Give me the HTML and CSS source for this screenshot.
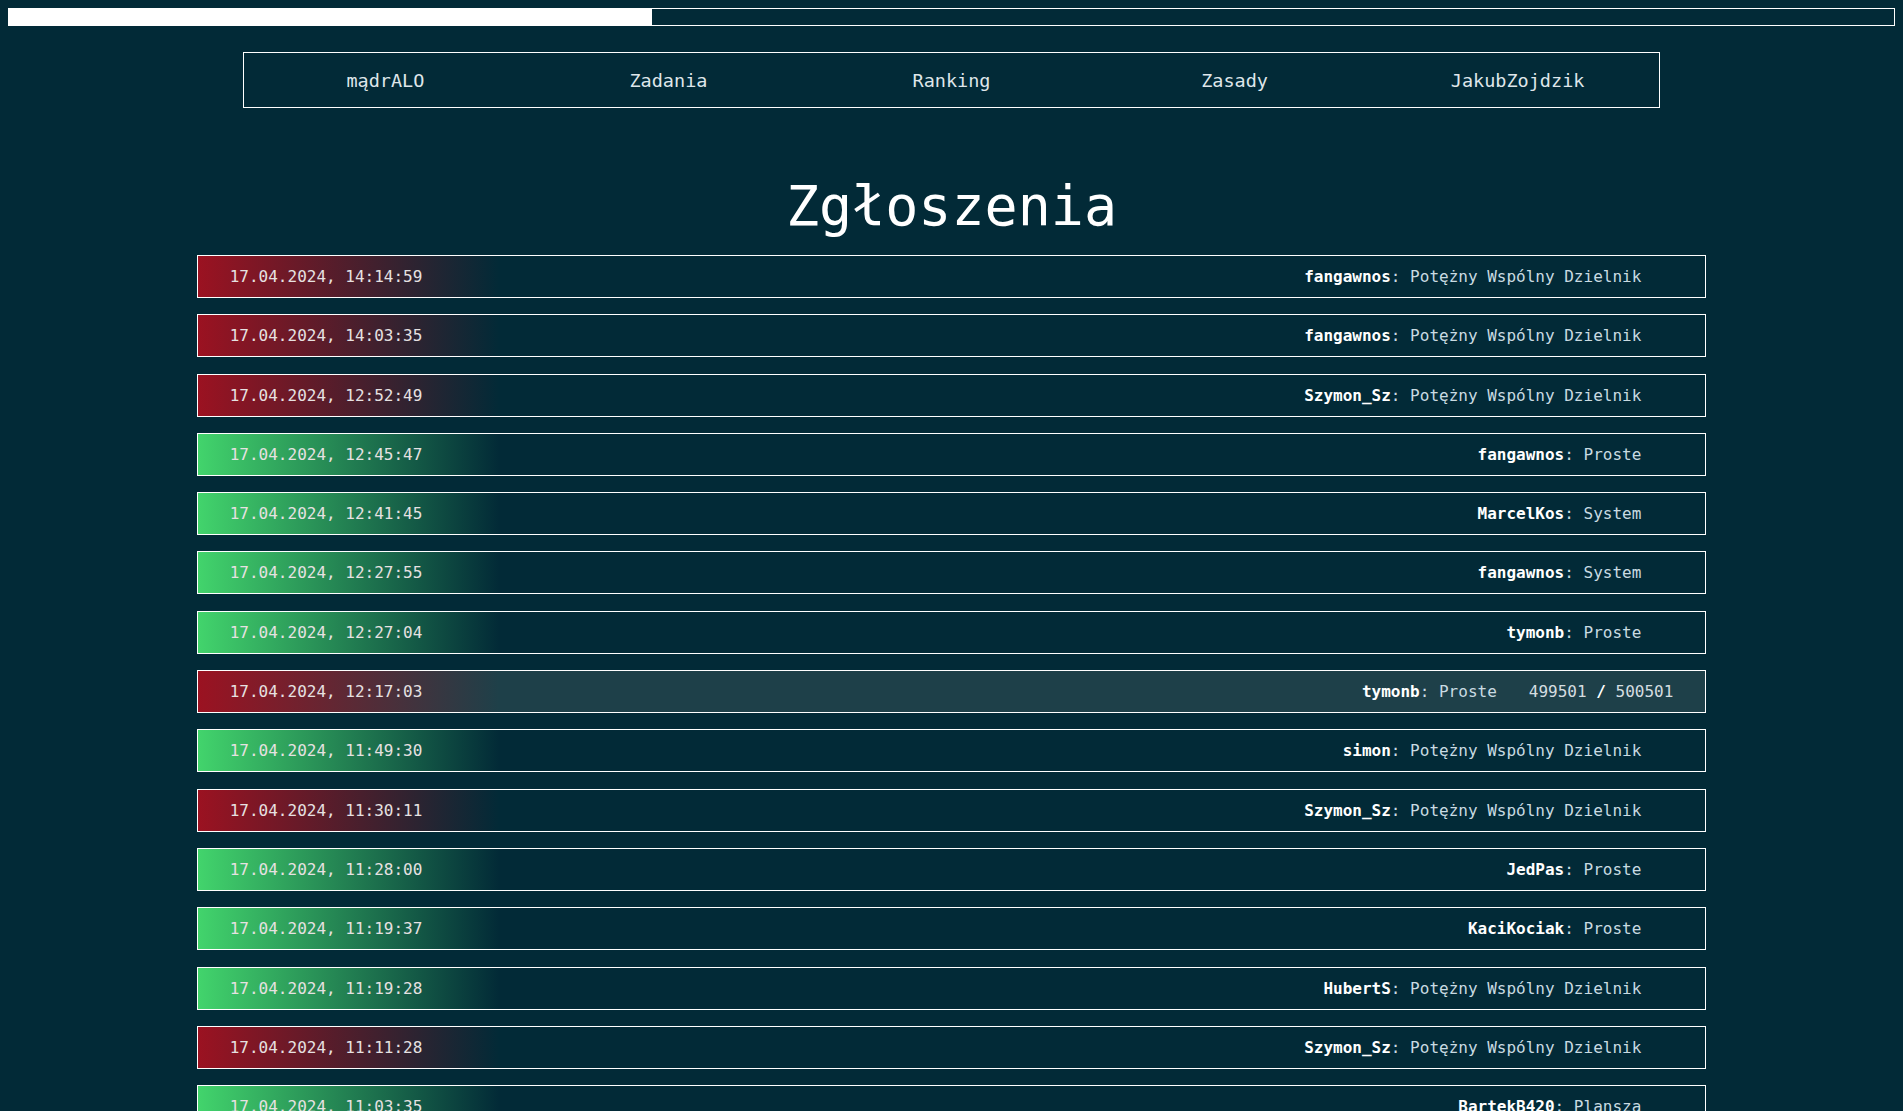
FILE: index.html
```html
<!DOCTYPE html>
<html lang="pl">
<head>
<meta charset="utf-8">
<title>Zgłoszenia</title>
<link rel="stylesheet" href="styles.css">
</head>
<body>
<div class="progress"><div class="progress-fill" style="width: 34.1%"></div></div>
<nav class="nav">
  <a class="nav-item">mądrALO</a>
  <a class="nav-item">Zadania</a>
  <a class="nav-item">Ranking</a>
  <a class="nav-item">Zasady</a>
  <a class="nav-item">JakubZojdzik</a>
</nav>
<h1 class="title">Zgłoszenia</h1>
<div class="list">
  <div class="row bad"><span class="date">17.04.2024, 14:14:59</span><span class="right"><span class="who"><b>fangawnos</b>: Potężny Wspólny Dzielnik</span><span class="score"></span></span></div>
  <div class="row bad"><span class="date">17.04.2024, 14:03:35</span><span class="right"><span class="who"><b>fangawnos</b>: Potężny Wspólny Dzielnik</span><span class="score"></span></span></div>
  <div class="row bad"><span class="date">17.04.2024, 12:52:49</span><span class="right"><span class="who"><b>Szymon_Sz</b>: Potężny Wspólny Dzielnik</span><span class="score"></span></span></div>
  <div class="row good"><span class="date">17.04.2024, 12:45:47</span><span class="right"><span class="who"><b>fangawnos</b>: Proste</span><span class="score"></span></span></div>
  <div class="row good"><span class="date">17.04.2024, 12:41:45</span><span class="right"><span class="who"><b>MarcelKos</b>: System</span><span class="score"></span></span></div>
  <div class="row good"><span class="date">17.04.2024, 12:27:55</span><span class="right"><span class="who"><b>fangawnos</b>: System</span><span class="score"></span></span></div>
  <div class="row good"><span class="date">17.04.2024, 12:27:04</span><span class="right"><span class="who"><b>tymonb</b>: Proste</span><span class="score"></span></span></div>
  <div class="row bad active"><span class="date">17.04.2024, 12:17:03</span><span class="right"><span class="who"><b>tymonb</b>: Proste</span><span class="score">499501 <b>/</b> 500501</span></span></div>
  <div class="row good"><span class="date">17.04.2024, 11:49:30</span><span class="right"><span class="who"><b>simon</b>: Potężny Wspólny Dzielnik</span><span class="score"></span></span></div>
  <div class="row bad"><span class="date">17.04.2024, 11:30:11</span><span class="right"><span class="who"><b>Szymon_Sz</b>: Potężny Wspólny Dzielnik</span><span class="score"></span></span></div>
  <div class="row good"><span class="date">17.04.2024, 11:28:00</span><span class="right"><span class="who"><b>JedPas</b>: Proste</span><span class="score"></span></span></div>
  <div class="row good"><span class="date">17.04.2024, 11:19:37</span><span class="right"><span class="who"><b>KaciKociak</b>: Proste</span><span class="score"></span></span></div>
  <div class="row good"><span class="date">17.04.2024, 11:19:28</span><span class="right"><span class="who"><b>HubertS</b>: Potężny Wspólny Dzielnik</span><span class="score"></span></span></div>
  <div class="row bad"><span class="date">17.04.2024, 11:11:28</span><span class="right"><span class="who"><b>Szymon_Sz</b>: Potężny Wspólny Dzielnik</span><span class="score"></span></span></div>
  <div class="row good"><span class="date">17.04.2024, 11:03:35</span><span class="right"><span class="who"><b>BartekB420</b>: Plansza</span><span class="score"></span></span></div>
</div>
</body>
</html>
```

FILE: styles.css
```css
html, body {
  background: #022a37;
}
body {
  margin: 8px;
  color: #dde3e6;
  font-family: "DejaVu Sans Mono", "Liberation Mono", monospace;
}
.progress {
  height: 16px;
  border: 1px solid #ffffff;
  box-sizing: content-box;
}
.progress-fill {
  height: 100%;
  background: #ffffff;
}
.nav {
  width: 75%;
  margin: 26px auto 0;
  height: 53px;
  box-sizing: content-box;
  border: 1px solid #ffffff;
  display: grid;
  grid-template-columns: repeat(5, 1fr);
  align-items: center;
  padding-top: 1px;
}
.nav-item {
  text-align: center;
  font-size: 18.5px;
  color: #dfe6ea;
}
.title {
  margin: 65px 0 16px;
  text-align: center;
  font-weight: 400;
  font-size: 55px;
  line-height: 66px;
  color: #ffffff;
}
.list {
  width: 80%;
  margin: 0 auto;
  display: flex;
  flex-direction: column;
  gap: 16.3px;
}
.row {
  height: 43px;
  box-sizing: border-box;
  border: 1px solid #ffffff;
  display: flex;
  align-items: center;
  justify-content: space-between;
  padding: 0 32px;
  font-size: 16px;
}
.row.bad {
  background-image: linear-gradient(90deg, #9b1221 0%, rgba(2, 42, 55, 0) 20%);
}
.row.good {
  background-image: linear-gradient(90deg, #42d46c 0%, rgba(2, 42, 55, 0) 20%);
}
.row.active {
  background-color: #1e4049;
  background-image: linear-gradient(90deg, #9b1221 0%, rgba(30, 64, 73, 0) 20%);
}
.date {
  color: #e6e1e1;
}
.right {
  display: flex;
  gap: 32px;
}
.who {
  color: #c9dbe2;
}
.who b {
  color: #ffffff;
  font-weight: 700;
}
.score {
  color: #d5dde0;
}
.score b {
  color: #ffffff;
}
```
